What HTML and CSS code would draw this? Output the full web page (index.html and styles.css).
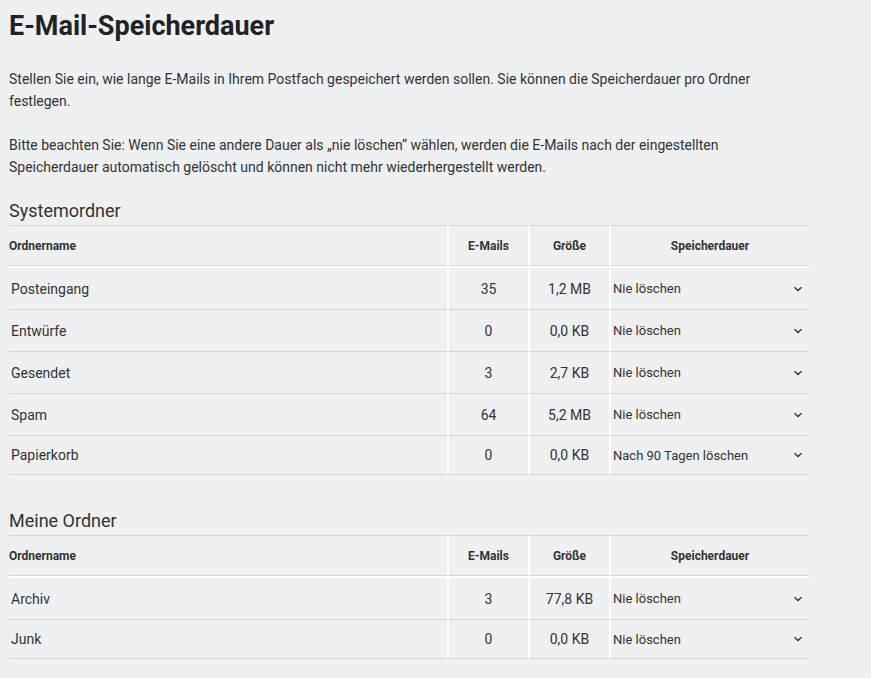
FILE: index.html
```html
<!DOCTYPE html>
<html lang="de">
<head>
<meta charset="utf-8">
<title>E-Mail-Speicherdauer</title>
<link rel="stylesheet" href="styles.css">
</head>
<body>
<main class="page">
  <h1 class="title">E-Mail-Speicherdauer</h1>
  <p class="text">Stellen Sie ein, wie lange E-Mails in Ihrem Postfach gespeichert werden sollen. Sie können die Speicherdauer pro Ordner festlegen.</p>
  <p class="text">Bitte beachten Sie: Wenn Sie eine andere Dauer als „nie löschen“ wählen, werden die E-Mails nach der eingestellten Speicherdauer automatisch gelöscht und können nicht mehr wiederhergestellt werden.</p>

  <section class="section">
    <h2 class="section-title">Systemordner</h2>
    <table class="folders">
      <thead>
        <tr>
          <th class="col-name">Ordnername</th>
          <th class="col-count">E-Mails</th>
          <th class="col-size">Größe</th>
          <th class="col-keep">Speicherdauer</th>
        </tr>
      </thead>
      <tbody>
        <tr><td class="col-name">Posteingang</td><td class="col-count">35</td><td class="col-size">1,2 MB</td><td class="col-keep"><div class="select"><span>Nie löschen</span><svg class="chev" viewBox="0 0 10 6" width="10" height="6"><path d="M1.5 1.2 5 4.6 8.5 1.2" fill="none" stroke="#333" stroke-width="1.4"/></svg></div></td></tr>
        <tr><td class="col-name">Entwürfe</td><td class="col-count">0</td><td class="col-size">0,0 KB</td><td class="col-keep"><div class="select"><span>Nie löschen</span><svg class="chev" viewBox="0 0 10 6" width="10" height="6"><path d="M1.5 1.2 5 4.6 8.5 1.2" fill="none" stroke="#333" stroke-width="1.4"/></svg></div></td></tr>
        <tr><td class="col-name">Gesendet</td><td class="col-count">3</td><td class="col-size">2,7 KB</td><td class="col-keep"><div class="select"><span>Nie löschen</span><svg class="chev" viewBox="0 0 10 6" width="10" height="6"><path d="M1.5 1.2 5 4.6 8.5 1.2" fill="none" stroke="#333" stroke-width="1.4"/></svg></div></td></tr>
        <tr><td class="col-name">Spam</td><td class="col-count">64</td><td class="col-size">5,2 MB</td><td class="col-keep"><div class="select"><span>Nie löschen</span><svg class="chev" viewBox="0 0 10 6" width="10" height="6"><path d="M1.5 1.2 5 4.6 8.5 1.2" fill="none" stroke="#333" stroke-width="1.4"/></svg></div></td></tr>
        <tr class="last"><td class="col-name">Papierkorb</td><td class="col-count">0</td><td class="col-size">0,0 KB</td><td class="col-keep"><div class="select"><span>Nach 90 Tagen löschen</span><svg class="chev" viewBox="0 0 10 6" width="10" height="6"><path d="M1.5 1.2 5 4.6 8.5 1.2" fill="none" stroke="#333" stroke-width="1.4"/></svg></div></td></tr>
      </tbody>
    </table>
  </section>

  <section class="section section-gap">
    <h2 class="section-title">Meine Ordner</h2>
    <table class="folders">
      <thead>
        <tr>
          <th class="col-name">Ordnername</th>
          <th class="col-count">E-Mails</th>
          <th class="col-size">Größe</th>
          <th class="col-keep">Speicherdauer</th>
        </tr>
      </thead>
      <tbody>
        <tr><td class="col-name">Archiv</td><td class="col-count">3</td><td class="col-size">77,8 KB</td><td class="col-keep"><div class="select"><span>Nie löschen</span><svg class="chev" viewBox="0 0 10 6" width="10" height="6"><path d="M1.5 1.2 5 4.6 8.5 1.2" fill="none" stroke="#333" stroke-width="1.4"/></svg></div></td></tr>
        <tr class="last"><td class="col-name">Junk</td><td class="col-count">0</td><td class="col-size">0,0 KB</td><td class="col-keep"><div class="select"><span>Nie löschen</span><svg class="chev" viewBox="0 0 10 6" width="10" height="6"><path d="M1.5 1.2 5 4.6 8.5 1.2" fill="none" stroke="#333" stroke-width="1.4"/></svg></div></td></tr>
      </tbody>
    </table>
  </section>
</main>
</body>
</html>
```

FILE: styles.css
```css
html, body {
  margin: 0;
  padding: 0;
  background: #eff0f2;
}

body {
  font-family: Roboto, "Liberation Sans", sans-serif;
  color: #333;
}

.page {
  display: flex;
  flex-direction: column;
  align-items: flex-start;
  padding: 10px 9px 0 9px;
}

.title {
  margin: 0 0 26px 0;
  font-size: 27px;
  line-height: 32px;
  font-weight: 700;
  color: #222;
}

.text {
  margin: 0 0 22px 0;
  font-size: 14px;
  line-height: 22px;
  max-width: 760px;
}

.text:last-of-type {
  margin-bottom: 0;
}

.section-title {
  margin: 21px 0 2px 0;
  font-size: 18px;
  line-height: 24px;
  font-weight: 400;
  color: #333;
}

.section-gap .section-title {
  margin-top: 34px;
}

.folders {
  width: 800px;
  border-collapse: separate;
  border-spacing: 0;
  table-layout: fixed;
}

.folders th {
  height: 39px;
  padding: 0;
  font-size: 12px;
  font-weight: 700;
  color: #333;
  border-top: 1px solid #d4d5d7;
  border-bottom: 1px solid #d4d5d7;
  text-align: center;
  vertical-align: middle;
}

.folders th + th,
.folders td + td {
  border-left: 2px solid #ffffff;
}

.folders th.col-name {
  text-align: left;
}

.folders tbody tr:first-child td {
  border-top: 2px solid #ffffff;
}

.folders td {
  height: 41px;
  padding: 0;
  font-size: 14px;
  color: #333;
  border-bottom: 1px solid #d4d5d7;
  text-align: center;
  vertical-align: middle;
}

.folders tr.last td {
  height: 38px;
}

.folders td.col-name {
  text-align: left;
  padding-left: 2px;
}

.col-name { width: auto; }
.col-count { width: 79px; }
.col-size { width: 79px; }
.col-keep { width: 198px; }

.select {
  display: flex;
  align-items: center;
  justify-content: space-between;
  padding: 0 6px 0 2px;
  font-size: 13px;
  text-align: left;
}

.chev {
  display: block;
  flex: none;
}
```
